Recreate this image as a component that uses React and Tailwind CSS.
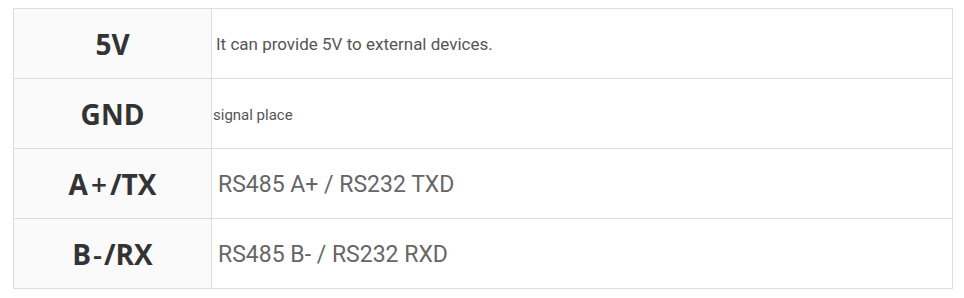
import React from 'react';

const rows = [
  { pin: ['5V'], desc: 'It can provide 5V to external devices.', descClass: 'pl-[4px] pt-[3px] text-[17px] text-[#555]' },
  { pin: ['GND'], desc: 'signal place', descClass: 'pl-[1px] pt-[4px] text-[15px] text-[#555]' },
  { pin: ['A', '+', '/TX', 'mx-[3px]'], desc: 'RS485 A+ / RS232 TXD', descClass: 'pl-[6px] pt-[4px] text-[23px] text-[#666]' },
  { pin: ['B', '-', '/RX', 'mx-[2px]'], desc: 'RS485 B- / RS232 RXD', descClass: 'pl-[6px] pt-[4px] text-[23px] text-[#666]' },
];

function Pin({ parts }) {
  if (parts.length === 1) return <span>{parts[0]}</span>;
  return (
    <span>
      {parts[0]}
      <span className={`${parts[3]} font-semibold`}>{parts[1]}</span>
      {parts[2]}
    </span>
  );
}

export default function App() {
  return (
    <div className="bg-white w-[964px] h-[298px] pl-[13px] pt-[8px]">
      <div className="w-[940px] border-t border-l border-r border-[#dcdcdc]">
        {rows.map((row) => (
          <div key={row.desc} className="flex h-[70px] border-b border-[#dcdcdc]">
            <div
              className="w-[198px] shrink-0 flex items-center justify-center bg-[#fafafa] border-r border-[#dcdcdc] text-[28px] font-bold text-[#333]"
              style={{ fontFamily: '"Open Sans", "Noto Sans", sans-serif' }}
            >
              <Pin parts={row.pin} />
            </div>
            <div
              className={`flex-1 flex items-center ${row.descClass}`}
              style={{ fontFamily: 'Roboto, "Liberation Sans", sans-serif' }}
            >
              {row.desc}
            </div>
          </div>
        ))}
      </div>
    </div>
  );
}
